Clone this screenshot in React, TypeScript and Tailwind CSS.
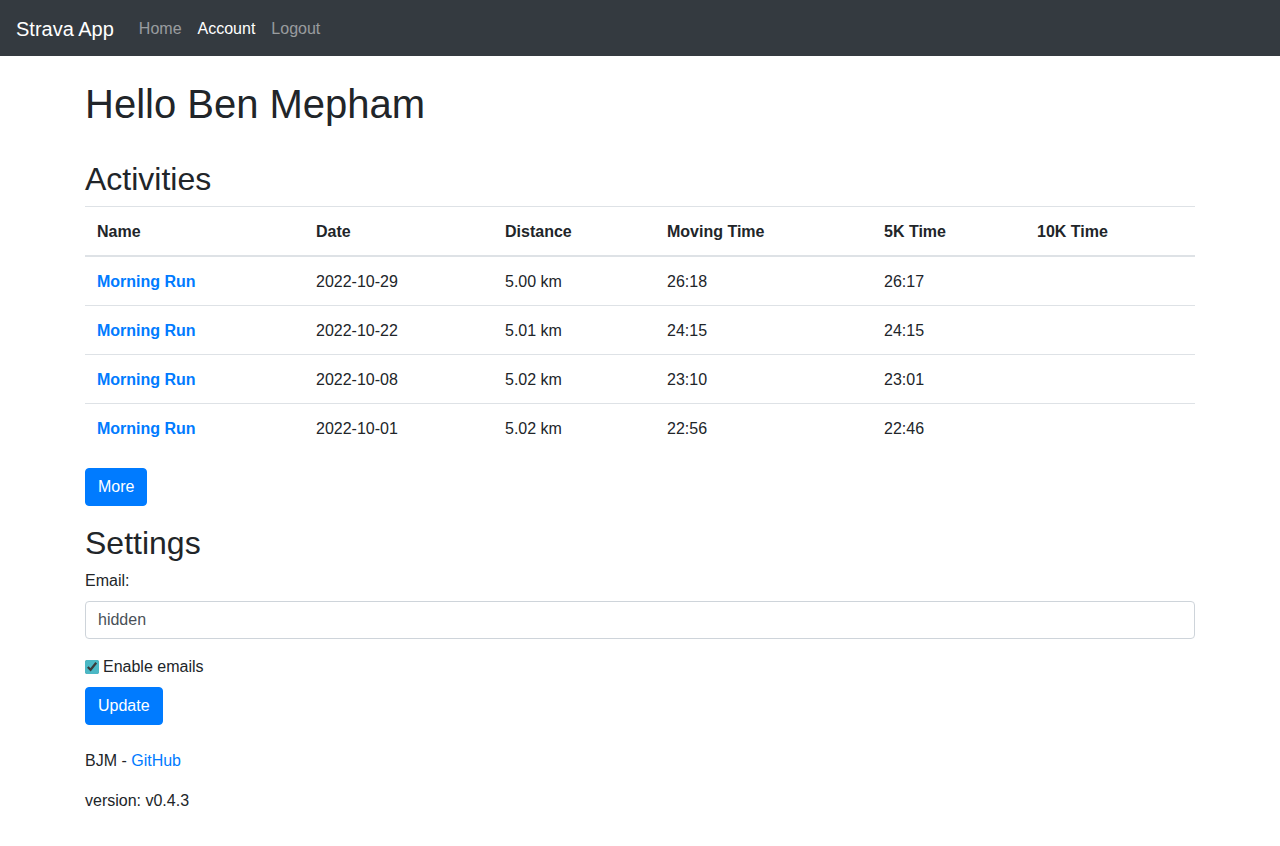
import React from "react";

const RUNS = [
  { date: "2022-10-29", dist: "5.00 km", moving: "26:18", fiveK: "26:17" },
  { date: "2022-10-22", dist: "5.01 km", moving: "24:15", fiveK: "24:15" },
  { date: "2022-10-08", dist: "5.02 km", moving: "23:10", fiveK: "23:01" },
  { date: "2022-10-01", dist: "5.02 km", moving: "22:56", fiveK: "22:46" },
];

function Nav() {
  return (
    <nav className="h-14 bg-[#343a40] px-4 pt-0.5 flex items-center">
      <a href="#" className="text-[20px] leading-[30px] text-white mr-[17px]">
        Strava App
      </a>
      <div className="flex">
        <a href="#" className="px-2 leading-6 text-white/50">Home</a>
        <a href="#" className="px-2 leading-6 text-white">Account</a>
        <a href="#" className="px-2 leading-6 text-white/50">Logout</a>
      </div>
    </nav>
  );
}

export default function App() {
  return (
    <div className="min-h-[846px] bg-white text-[#212529] text-base leading-6 font-['Liberation_Sans',Arial,sans-serif]">
      <Nav />
      <main className="w-[1140px] mx-auto px-[15px] pt-6">
        <h1 className="text-[40px] leading-[48px] mb-2">Hello Ben Mepham</h1>

        <h2 className="text-[32px] leading-[38.4px] mt-8 mb-2">Activities</h2>
        <table className="w-full mb-4 border-collapse text-left">
          <thead>
            <tr className="border-t border-[#dee2e6] border-b-2">
              <th className="w-[219px] px-3 pt-[13px] pb-[11px] font-bold">Name</th>
              <th className="w-[189px] px-3 pt-[13px] pb-[11px] font-bold">Date</th>
              <th className="w-[162px] px-3 pt-[13px] pb-[11px] font-bold">Distance</th>
              <th className="w-[217px] px-3 pt-[13px] pb-[11px] font-bold">Moving Time</th>
              <th className="w-[153px] px-3 pt-[13px] pb-[11px] font-bold">5K Time</th>
              <th className="px-3 pt-[13px] pb-[11px] font-bold">10K Time</th>
            </tr>
          </thead>
          <tbody>
            {RUNS.map((r) => (
              <tr key={r.date} className="border-t border-[#dee2e6]">
                <td className="px-3 pt-[13px] pb-[11px]">
                  <a href="#" className="font-bold text-[#007bff]">Morning Run</a>
                </td>
                <td className="px-3 pt-[13px] pb-[11px]">{r.date}</td>
                <td className="px-3 pt-[13px] pb-[11px]">{r.dist}</td>
                <td className="px-3 pt-[13px] pb-[11px]">{r.moving}</td>
                <td className="px-3 pt-[13px] pb-[11px]">{r.fiveK}</td>
                <td className="px-3 pt-[13px] pb-[11px]"></td>
              </tr>
            ))}
          </tbody>
        </table>
        <button className="bg-[#007bff] text-white px-3 py-1.5 rounded border border-[#007bff] leading-6 mb-4">
          More
        </button>

        <h2 className="text-[32px] leading-[38.4px] pt-0.5 mb-1.5">Settings</h2>
        <form>
          <div className="mb-4">
            <label className="block mb-2">Email:</label>
            <input
              defaultValue="hidden"
              className="block w-full h-[38px] px-3 py-1.5 border border-[#ced4da] rounded text-[#495057] leading-6"
            />
          </div>
          <label className="flex items-center mb-2">
            <input type="checkbox" defaultChecked className="w-[14px] h-[14px] mr-1 accent-[#4bb8c5]" />
            Enable emails
          </label>
          <button type="button" className="bg-[#007bff] text-white px-3 py-1.5 rounded border border-[#007bff] leading-6">
            Update
          </button>
        </form>

        <footer className="mt-6">
          <p className="mb-4">
            BJM - <a href="#" className="text-[#007bff]">GitHub</a>
          </p>
          <p className="mb-4">version: v0.4.3</p>
        </footer>
      </main>
    </div>
  );
}
